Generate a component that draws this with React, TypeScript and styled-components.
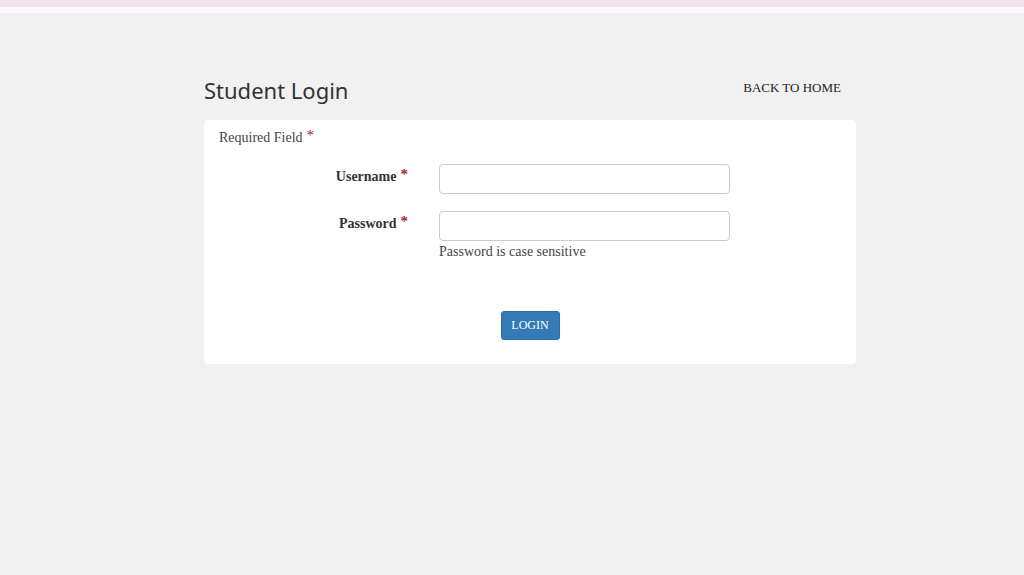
import styled, { createGlobalStyle } from 'styled-components';

const Global = createGlobalStyle`
  html, body { margin: 0; background: #f1f1f1; }
  body { font-family: 'Liberation Serif', 'Times New Roman', serif; color: #333; }
`;

const TopBand = styled.div`
  height: 7px;
  background: #f3e5ec;
  border-bottom: 6px solid #fdf9fb;
`;

const Wrapper = styled.div`
  width: 652px;
  margin: 0 0 0 204px;
  padding-top: 60px;
`;

const Header = styled.div`
  display: flex;
  justify-content: space-between;
  align-items: flex-start;
  height: 47px;
`;

const Title = styled.h1`
  margin: 2px 0 0;
  font-family: 'Noto Sans', 'Open Sans', sans-serif;
  font-weight: 400;
  font-size: 22px;
  color: #333;
`;

const BackLink = styled.a`
  font-size: 13px;
  color: #222;
  text-decoration: none;
  text-transform: uppercase;
  margin: 7px 15px 0 0;
`;

const Card = styled.div`
  background: #fff;
  border-radius: 4px;
  padding: 10px 0 24px;
`;

const Required = styled.div`
  font-size: 14px;
  color: #444;
  padding-left: 15px;
  margin-bottom: 17px;
`;

const Star = styled.span`
  color: #9b2b35;
  font-size: 15px;
  vertical-align: top;
  margin-left: 4px;
  position: relative;
  top: -3px;
`;

const Row = styled.div`
  display: grid;
  grid-template-columns: 220px 291px;
  column-gap: 15px;
  margin-bottom: 17px;
`;

const Label = styled.label`
  text-align: right;
  padding: 5px 16px 0 0;
  font-weight: 700;
  font-size: 14px;
  color: #333;
`;

const Field = styled.div`
  display: flex;
  flex-direction: column;
`;

const Input = styled.input`
  box-sizing: border-box;
  height: 30px;
  border: 1px solid #ccc;
  border-radius: 4px;
  width: 100%;
  font-size: 14px;
`;

const Hint = styled.div`
  font-size: 14px;
  color: #444;
  margin-top: 3px;
`;

const Actions = styled.div`
  display: flex;
  justify-content: center;
  padding-top: 34px;
`;

const Button = styled.button`
  background: #337ab7;
  color: #fff;
  border: 1px solid #2e6da4;
  border-radius: 3px;
  width: 59px;
  height: 29px;
  font-family: 'Liberation Serif', serif;
  font-size: 12px;
`;

export default function App() {
  return (
    <>
      <Global />
      <TopBand />
      <Wrapper>
        <Header>
          <Title>Student Login</Title>
          <BackLink href='#'>Back to Home</BackLink>
        </Header>
        <Card>
          <Required>
            Required Field<Star>*</Star>
          </Required>
          <Row>
            <Label>
              Username<Star>*</Star>
            </Label>
            <Field>
              <Input type='text' />
            </Field>
          </Row>
          <Row>
            <Label>
              Password<Star>*</Star>
            </Label>
            <Field>
              <Input type='password' />
              <Hint>Password is case sensitive</Hint>
            </Field>
          </Row>
          <Actions>
            <Button type='button'>LOGIN</Button>
          </Actions>
        </Card>
      </Wrapper>
    </>
  );
}
